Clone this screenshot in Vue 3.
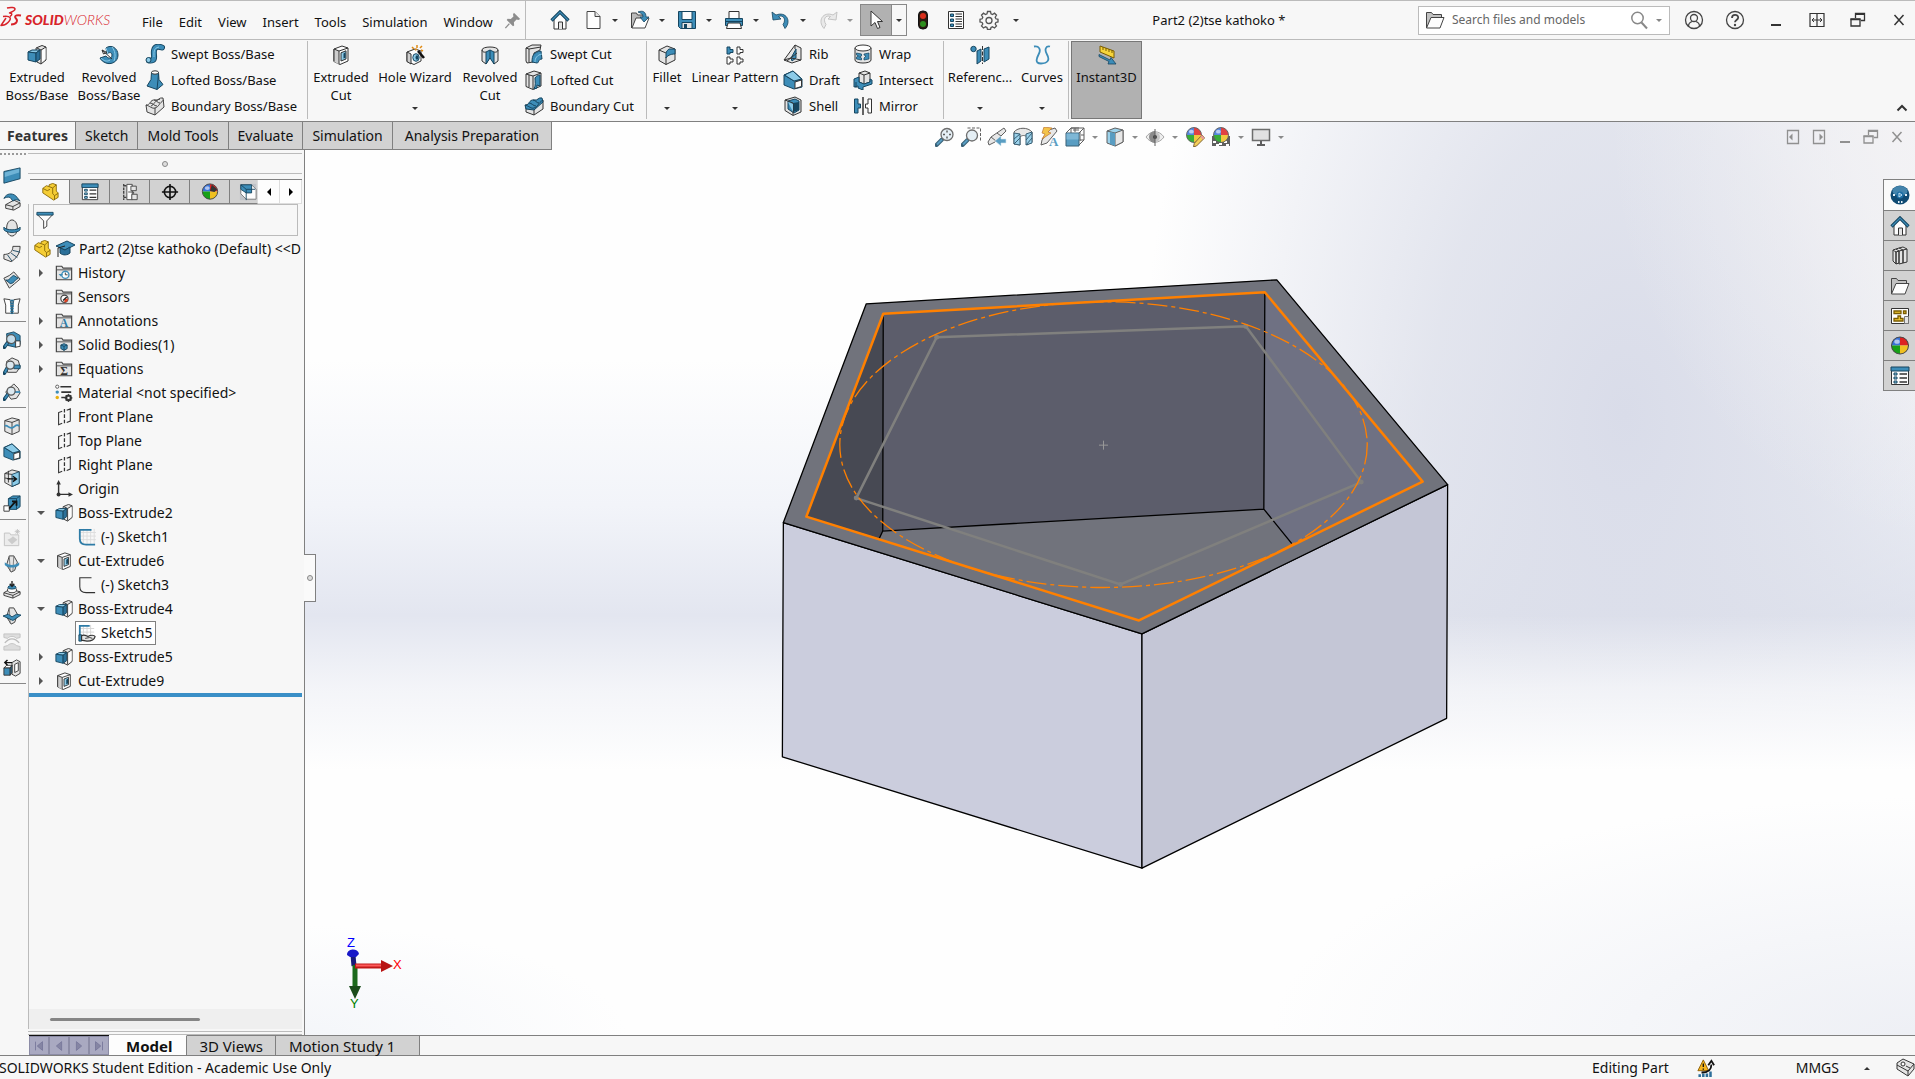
<script setup>
import { ref } from 'vue'

// icon colors
const K = '#333'
const D = '#16455f'
const B = '#3d8db8'
const L = '#8ccbe8'
const G = '#e4e4e4'
const W = '#fdfdfd'

const box = (fill, side, x = 0, y = 0) =>
  `<g transform="translate(${x} ${y})" stroke-linejoin="round"><path d="M1 4l3-3h6l-2 3z" fill="${W}" stroke="${K}"/><path d="M1 4h7v8H1z" fill="${fill}" stroke="${K}"/><path d="M8 4l2-3v8l-2 3z" fill="${side}" stroke="${K}"/></g>`
const ball = (x, y, r) =>
  `<g transform="translate(${x} ${y}) scale(${r})"><path d="M0 0V-1A1 1 0 0 0-1 0z" fill="#3a72d8"/><path d="M0 0V-1A1 1 0 0 1 1 0z" fill="#d22"/><path d="M0 0H-1A1 1 0 0 0 0 1z" fill="#17a017"/><path d="M0 0V1A1 1 0 0 0 1 0z" fill="#f0c020"/><circle r="1" fill="none" stroke="#444" stroke-width=".12"/><ellipse cx="-.35" cy="-.45" rx=".32" ry=".25" fill="#fff" opacity=".6"/></g>`
const folder = `<path d="M1.500 17.500v-15h6l1.500 2h9.500v13z" fill="${G}" stroke="#444" stroke-width="1.300"/><path d="M2 6.500h16" stroke="#444"/>`
const lens = (x, y, r) =>
  `<path d="M${x - r + 1} ${y + r - 1}L1.500 18" stroke="${D}" stroke-width="4" stroke-linecap="round"/><path d="M${x - r + 1} ${y + r - 1}L2 17.500" stroke="${B}" stroke-width="2"/><circle cx="${x}" cy="${y}" r="${r}" fill="#dceaf2" fill-opacity=".85" stroke="#555" stroke-width="1.300"/>`
const list = (head) =>
  `<path d="M1.500 1.500h17v17h-17z" fill="${W}" stroke="${K}"/>${head ? `<path d="M1 1h18v4H1z" fill="${B}" stroke="${D}"/>` : ''}<path d="M4 7h3v2H4zM4 11h3v2H4zM4 15h3v2H4z" fill="${L}" stroke="${D}"/><path d="M9.500 8H17M9.500 12H17M9.500 16H17" stroke="${K}" stroke-width="1.300"/>`

const icons = {
  home: `<path d="M4 9v10h12V9l-6-6z" fill="${W}" stroke="${K}"/><path d="M8.500 19v-7h4v7" fill="${G}" stroke="${K}"/><path d="M1.500 10.500L10 2l8.500 8.500" fill="none" stroke="${D}" stroke-width="3.200"/><path d="M2 10L10 2l8 8" fill="none" stroke="${B}" stroke-width="1.200"/>`,
  doc: `<path d="M4 1.500h8l5 5v12H4z" fill="${W}" stroke="#444"/><path d="M12 1.500v5h5" fill="${G}" stroke="#444"/>`,
  open: `<path d="M1.500 18V3h5l1 2h6v3" fill="#bbb" stroke="#444"/><path d="M2 18L6 8h13l-4 10z" fill="${W}" stroke="#444"/><path d="M8 2c5-2 8 0 8 5h3l-5 5-4-5h3c0-3-2-4-5-5z" fill="${B}" stroke="${D}" stroke-width=".8"/>`,
  save: `<path d="M1.500 1.500h17v17h-15l-2-2z" fill="${B}" stroke="${D}"/><path d="M5 1.500h10v8H5z" fill="${W}" stroke="${D}"/><path d="M5 12.500h10v6H5z" fill="${G}" stroke="${D}"/><path d="M7 14h3v4.500H7z" fill="${D}"/>`,
  print: `<path d="M5 8V1.500h10V8" fill="${W}" stroke="${K}"/><path d="M1.500 8.500h17v7h-17z" fill="${B}" stroke="${D}"/><path d="M1.500 11.500h17" stroke="${D}"/><path d="M4 13h12l1.500 5.500h-15z" fill="${W}" stroke="${K}"/>`,
  undo: `<path d="M1 2l1 8 8-1-2.500-2.500c5-2 8 3 4.500 8l2 4C21 11 15 1 5 5z" fill="${B}" stroke="${D}" stroke-width=".8"/>`,
  redo: `<path d="M19 2l-1 8-8-1 2.500-2.500c-5-2-8 3-4.500 8l-2 4C-1 11 5 1 15 5z" fill="#e9e9e9" stroke="#c4c4c4"/>`,
  cursor: `<path d="M5 1v15l4-3.500 2.500 6 2.500-1-2.500-6h5z" fill="${W}" stroke="${K}"/>`,
  traffic: `<rect x="5.500" y="1" width="9" height="18" rx="4" fill="#2b1b12" stroke="#111"/><circle cx="10" cy="6" r="3" fill="#d8301c"/><circle cx="10" cy="14" r="3" fill="#2f8f1f"/>`,
  options: `<path d="M2.500 1.500h15v17h-15z" fill="${W}" stroke="${K}"/><path d="M4.500 4h3v2.500h-3zM4.500 9h3v2.500h-3zM4.500 14h3v2.500h-3z" fill="${B}" stroke="${D}"/><path d="M9.500 4H16M9.500 6.500H16M9.500 9H16M9.500 11.500H16M9.500 14H16M9.500 16.500H16" stroke="${K}"/>`,
  gear: `<path d="M8.500 1.500h3l.5 2.300 1.500.7 2-1.300 2 2-1.300 2 .7 1.600 2.100.5v2.600l-2.100.6-.7 1.500 1.300 2-2 2-2-1.200-1.500.7-.5 2h-3l-.5-2-1.500-.7-2 1.200-2-2 1.300-2-.7-1.500L1 11.900V9.300l2.100-.5.7-1.600-1.300-2 2-2 2 1.300L8 3.800z" fill="#f7f7f7" stroke="#555" stroke-width="1.300"/><circle cx="10" cy="10.500" r="3" fill="none" stroke="#555" stroke-width="1.300"/>`,
  pin: `<path d="M11 2l7 7-2 1-2-.5-3 3 .3 3.500-1.300 1-7-7 1-1.300 3.500.3 3-3L10 4z" fill="#8d8d8d"/><path d="M6 14l-4.500 5" stroke="#8d8d8d" stroke-width="1.500"/>`,
  search: `<circle cx="8.500" cy="8" r="5.700" fill="none" stroke="#888" stroke-width="1.500"/><path d="M12.500 12.500l5.500 6" stroke="#888" stroke-width="2"/>`,
  folder: `<path d="M1.500 18V2.500h5l1.500 2h8.500V8" fill="#c2c2c2" stroke="#444"/><path d="M1.500 18L6 7.500h13L15 18z" fill="${W}" stroke="#444"/>`,
  user: `<circle cx="10" cy="10" r="8.500" fill="none" stroke="#444" stroke-width="1.300"/><circle cx="10" cy="8" r="3.500" fill="none" stroke="#444" stroke-width="1.300"/><path d="M4.500 16.500c0-3 2-4.500 3.700-5M15.500 16.500c0-3-2-4.500-3.700-5" fill="none" stroke="#444" stroke-width="1.300"/>`,
  help: `<circle cx="10" cy="10" r="8.500" fill="none" stroke="#444" stroke-width="1.300"/><path d="M7 8c0-4 6.200-4 6.200-.5 0 2.500-3.200 2.500-3.200 4.800" fill="none" stroke="#444" stroke-width="1.800"/><circle cx="10" cy="15" r="1.200" fill="#444"/>`,
  min: `<path d="M5 15h10" stroke="currentColor" stroke-width="2"/>`,
  span: `<path d="M3 3.500h14v13H3zM10 3.500v13" fill="none" stroke="currentColor" stroke-width="1.200"/><path d="M5 10h10M7 8l-2 2 2 2M13 8l2 2-2 2" fill="none" stroke="currentColor"/>`,
  restore: `<path d="M7.500 8V3.500h9v7H13" fill="none" stroke="currentColor" stroke-width="1.300"/><path d="M3 9h9v7H3z" fill="none" stroke="currentColor" stroke-width="1.300"/><path d="M7 4.300h10M2.500 9.500h10" stroke="currentColor" stroke-width="1.500"/>`,
  close: `<path d="M5.500 5l9 10M14.500 5l-9 10" stroke="currentColor" stroke-width="1.500"/>`,
  chevron: `<path d="M5.500 12.500L10 8l4.500 4.500" fill="none" stroke="#333" stroke-width="2"/>`,
  paneL: `<path d="M4.500 3.500h11v13h-11z" fill="none" stroke="currentColor" stroke-width="1.300"/><path d="M9.500 6.500L6 10l3.500 3.500z" fill="currentColor"/>`,
  paneR: `<path d="M4.500 3.500h11v13h-11z" fill="none" stroke="currentColor" stroke-width="1.300"/><path d="M10.500 6.500L14 10l-3.500 3.500z" fill="currentColor"/>`,

  extrude: `<path d="M9 3l6-2.500 4 1.500v13l-5 4-4-2z" fill="${G}" stroke="${K}"/><path d="M14 5l5-3M14 5v13.500M14 5l-4-2" fill="none" stroke="${K}"/><path d="M15 5.500l3.500-2.500v11l-3.500 3z" fill="${W}"/><path d="M1 7l4-2h8l-4 3z" fill="${L}" stroke="${D}"/><path d="M1 7l8 1v9l-8-2z" fill="${B}" stroke="${D}"/><path d="M9 8l4-3v9l-4 3z" fill="#2b7099" stroke="${D}"/>`,
  revolve: `<path d="M7 3c5-4 12 0 12 7s-7 10-12 8c-3-1-5-3-6-5l6-2c2 3 6 3 6-1 0-3-3-3-5-1z" fill="${B}" stroke="${D}"/><path d="M7 3l2 6M13 2c3 4 4 8 2 14M2 13c3 3 6 4 9 2" fill="none" stroke="${L}"/><path d="M3 5l10 9M3 5l1.500 4L8 7.500z" stroke="${K}" fill="${W}"/>`,
  sweep: `<path d="M4 16.500c8 1 4-5 5-10s5-4 8-3" fill="none" stroke="${D}" stroke-width="6" stroke-linecap="round"/><path d="M4 16.500c8 1 4-5 5-10s5-4 8-3" fill="none" stroke="${B}" stroke-width="4.200" stroke-linecap="round"/><path d="M9 13c0-4-1-9 5-10" fill="none" stroke="${L}"/><circle cx="3.500" cy="16" r="2.500" fill="${L}" stroke="${D}"/>`,
  loft: `<path d="M6.500 2.500h7l.5 7 4 5-6 5-10-3.500L6 9.500z" fill="${B}" stroke="${D}"/><path d="M12 19.500l1-10 .5-7" fill="none" stroke="${D}"/><ellipse cx="10" cy="2.500" rx="3.500" ry="1.700" fill="${W}" stroke="${K}"/>`,
  boundary: `<path d="M1 9c4 1 4-6 9-5 4 1 4-3 8-2l1 9-9 8-8-3z" fill="${G}" stroke="#444"/><path d="M1 9c4 1 6 4 9 3 4-1 4-5 9-8M5 7c3 0 4 3 7 3M9 4c3 0 3 3 6 3M10 12v7M6 10c3-1 4-6 9-7" fill="none" stroke="#444"/>`,
  extrudeCut: `<path d="M3 4l8-3 6 2v13l-8 3.500-6-3z" fill="${W}" stroke="${K}"/><path d="M3 4l5 2v13.500l-5-3z" fill="#cfcfcf"/><path d="M3 4l5 2 9-3M8 6v13M3 4v12.500" fill="none" stroke="${K}"/><path d="M10 7.800l5-2v8.200l-5 2z" fill="${L}" stroke="${K}"/><path d="M12.500 8.500v5l2 -.8V7.200z" fill="${D}"/>`,
  hole: `<path d="M2 7l8-3 6 2v10l-7 3.500-7-3z" fill="${W}" stroke="${K}"/><path d="M2 7l4 2v10l-4-2.500z" fill="#cfcfcf" stroke="${K}"/><ellipse cx="11" cy="12.500" rx="3.200" ry="3.800" fill="${L}" stroke="${D}"/><ellipse cx="12" cy="12.500" rx="1.500" ry="2.300" fill="${D}"/><path d="M13 6l6 7" stroke="#111" stroke-width="2.600"/><path d="M7 2l2 2M12 0v3M17 1l-2 2M18 6l-2-1M10 5l2-1" stroke="#e08a14" stroke-width="1.500"/>`,
  revolveCut: `<path d="M2 5c0-4 16-4 16 0v11l-4 3-3-9-5 9-4-3z" fill="${G}" stroke="${K}"/><path d="M6 7l4-2 4 2v12l-4-6-4 6z" fill="${B}" stroke="${D}"/><path d="M10 5v9" stroke="${D}"/><path d="M2 5c1 3 3 2 4 2M18 5c-1 3-3 2-4 2" fill="none" stroke="${K}"/>`,
  sweepCut: `<path d="M2 4l6-3h9l-1 5-6 3-1 9-6 1-1-2z" fill="${G}" stroke="${K}"/><path d="M5 18V5l12-2M2 4l3 1" fill="none" stroke="${K}"/><path d="M8 18c0-7 2-10 9-11l1 8c-4 0-3 4-5 4z" fill="${B}" stroke="${D}"/><path d="M11 18c0-4 2-7 7-8" fill="none" stroke="${L}"/>`,
  loftCut: `<path d="M2 4l8-3 7 2v13l-8 3.500-7-3z" fill="${G}" stroke="${K}"/><path d="M2 4l7 2 8-3M9 6v13M5 5v12" fill="none" stroke="${K}"/><path d="M11 8c2-3 5-3 5-3v11l-3-1v3l-3 1c2-4 1-7 1-11z" fill="${B}" stroke="${D}"/>`,
  boundaryCut: `<path d="M2 9l17-5v9l-9 6-8-3z" fill="${G}" stroke="${K}"/><path d="M1 9c4 1 4-6 9-5 4 1 4-3 8-2l1 4-9 8-8-1z" fill="${B}" stroke="${D}"/><path d="M1 9c4 1 6 4 9 3 4-1 4-5 9-8M5 7c3 0 4 3 7 3M9 4c3 0 3 3 6 3" fill="none" stroke="${D}"/><path d="M10 14v5" stroke="${K}"/>`,
  fillet: `<path d="M2 5l8-4 8 3v11l-9 4.500-7-4z" fill="${G}" stroke="${K}"/><path d="M2 5l7 3M9 12v7.500" stroke="${K}" fill="none"/><path d="M12 4l6 0 0 5c-5 0-8 2-9 4V9c0-3 2-4 3-5z" fill="${B}" stroke="${D}"/>`,
  linear: `<path d="M2 2h3v2.500h3v3H5V9H2z" fill="${B}" stroke="${D}"/><path d="M12 2h3v2.500h3v3h-3V9h-3zM2 12h3v2h3v3H5v2H2zM12 12h3v2h3v3h-3v2h-3z" fill="${W}" stroke="${K}"/>`,
  rib: `<path d="M1 16L12 1l6 3v12l-9 3z" fill="${G}" stroke="${K}"/><path d="M8 14l5-9v9l-4 3z" fill="${B}" stroke="${D}"/><path d="M12 1v4M1 16l7-2 10 2M4 17L14 9" fill="none" stroke="${K}"/>`,
  draft: `<path d="M1 5l9-4 9 8v8l-8 2-10-4z" fill="${B}" stroke="${D}"/><path d="M1 5l10 6 8-2" fill="none" stroke="${D}"/><path d="M1.500 5l8.500-4 8.500 8-7.500 2z" fill="${L}" stroke="${D}"/><path d="M12 12l6.500-2v6.500L12 18.500z" fill="${W}" stroke="${K}"/>`,
  shell: `<path d="M2 4l10-3 6 3v12l-8 3.500-8-5z" fill="${G}" stroke="${K}"/><path d="M5 5l7-2 4 2v9l-5 3-6-4z" fill="${B}" stroke="${D}"/><path d="M10 7v9l6-2V6z" fill="${D}"/><path d="M2 4l8 3v12" fill="none" stroke="${K}"/><path d="M5 6l5 2v8" fill="${L}"/>`,
  wrap: `<path d="M2 4v12c0 4 16 4 16 0V4" fill="${G}" stroke="${K}"/><ellipse cx="10" cy="4" rx="8" ry="3" fill="${W}" stroke="${K}"/><path d="M3.500 9l5 1v2l-2 1 2 1v2l-5-1v-2l2-1-2-1zM11 10l5-1v6l-5 1v-2l2-2-2-1z" fill="${B}" stroke="${D}" stroke-width=".7"/>`,
  intersect: `<path d="M6 3l6-2 5 2v9l-6 2-5-2z" fill="${G}" stroke="${K}"/><path d="M6 3l5 2 6-2M11 5v8" fill="none" stroke="${K}"/><path d="M1 9l5-2v5l5 2 6-2v-3l2 1v4l-9 3v3l-5-2v-2l-4 1z" fill="${B}" stroke="${D}"/><path d="M3 12v6" stroke="${D}"/>`,
  mirror: `<path d="M1.500 3H5v5h2.500v4H5v5H1.500z" fill="${B}" stroke="${D}"/><path d="M18.500 3H15v5h-2.500v4H15v5h3.500z" fill="${W}" stroke="${K}"/><path d="M10 1v18" stroke="${K}" stroke-width="1.500"/>`,
  reference: `<circle cx="3.500" cy="4" r="2.700" fill="${B}" stroke="${D}"/><path d="M7 6l4-2v12l-4 3zM14 4l5-2v12l-5 3z" fill="${B}" stroke="${D}"/><path d="M12.500 1v18" stroke="${K}" stroke-dasharray="4 1.500"/>`,
  curves: `<path d="M2 1.500c5-1 7 3 5 7s-5 10 2 10 9-4 6-9-1-9 3-8" fill="none" stroke="${B}" stroke-width="1.800"/>`,
  instant: `<path d="M3 1l14 5v7L3 7z" fill="#f6d53c" stroke="#7a5c00"/><path d="M6 2v3M9 3v3M12 4v3M15 5v3" stroke="#7a5c00"/><path d="M2 9.500l11 5.500 1-2.500 5 6.500-8 0 1-2.500-10-5z" fill="${B}" stroke="${D}" stroke-width=".8"/>`,

  zoomFit: `${lens(12, 7.500, 6)}<path d="M12 3.500v2M12 9.500v2M8 7.500h2M14 7.500h2" stroke="#444" stroke-width="1.500"/>`,
  zoomArea: `<path d="M6.500 1h13v13" fill="none" stroke="#444" stroke-dasharray="3 1.500"/>${lens(11, 8.500, 5.500)}`,
  prevView: `<path d="M17 1l2 3-11 11-6 3-1-3 3-5z" fill="${G}" stroke="#444"/><path d="M4 10l5 4M10 6l4 3" stroke="#444"/><path d="M19 12h-5V9l-6 5 6 5v-3h5z" fill="${B}" stroke="#cfe3ee" stroke-width=".6"/>`,
  section: `<path d="M1 5c4-5 14-5 18 0v10l-5 3v-8c-2-2-5-2-7 0v8l-6-1z" fill="${G}" stroke="#444"/><path d="M1 6l6 1v11l-6-1zM13 7l6-2v11l-6 2z" fill="${L}" stroke="${D}"/><path d="M1 12l6-5M1 17l6-6M13 13l6-7M13 18l6-7" stroke="${D}"/>`,
  annot: `<path d="M10 3l6-2 2 3L8 16l-6 2 1-5z" fill="${G}" stroke="#444"/><path d="M5 0l8 1-4 4 3 1-9 6 3-5-3-1z" fill="#f2b92a" stroke="#b05a10" stroke-width=".7"/><text x="10" y="19" font-family="Liberation Serif" font-weight="700" font-size="13" fill="${B}">A</text>`,
  viewCube: `<path d="M6 1h13v12h-4M6 1v5M1 6l5-5M14 6l5-5M14 18l5-5M10 1v4M15 5v9M6 1l8 0" fill="none" stroke="#444"/><path d="M1 6h13v13H1z" fill="${B}" stroke="${D}"/><path d="M1.500 6.500h12v6h-12z" fill="#68abd0"/><path d="M16 8h3M8 3h6" stroke="#444"/>`,
  display: `<path d="M2 4l8-3 8 2v12l-8 4-8-3z" fill="${L}" stroke="#444"/><path d="M10 6l8-3v12l-8 4z" fill="${G}" stroke="#444"/><path d="M2 4l8 2" stroke="#444"/><path d="M5 5v12l5 2V6z" fill="${B}"/>`,
  eye: `<path d="M1 10c5-7 13-7 18 0-5 7-13 7-18 0z" fill="#ececec" stroke="#999"/><path d="M10 4a5.500 5.500 0 0 0 0 12z" fill="#777"/><path d="M10 5a5 5 0 0 1 0 10" fill="#bbb"/><circle cx="10" cy="10" r="2" fill="#222"/><path d="M10 2v17" stroke="#444"/>`,
  appearance: `${ball(9, 8, 7.500)}<path d="M17 8l2.500 3-8 8-3 .8.800-3.500z" fill="#f3c63c" stroke="#6b4a10"/><path d="M17 8l2.500 3-1.500 1.500-2.700-2.800z" fill="#e58a8a"/>`,
  scene: `<path d="M1 9h18v10H1z" fill="#444"/><path d="M2 14h3v2H2zM8 16h3v2H8zM13 14h3v2h-3zM5 17h3v2H5zM15 17h3v2h-3z" fill="#fff"/>${ball(10, 8, 7.500)}`,
  monitor: `<path d="M1.500 2.500h17v11h-17z" fill="#dedede" stroke="#555" stroke-width="1.500"/><path d="M10 14v4M6 18h8" stroke="#444" stroke-width="2"/>`,

  part: `<path d="M2 6l4-3 3 1V2l4-1.500L17 2v7l2 2v5l-5 3L2 11z" fill="#f5cd35" stroke="#8a6a08"/><path d="M2 6l5 2.500 3-1.500M9 4l4 1.500V12l2 2 4-2.500M13 5.500L17 2M15 14v5" fill="none" stroke="#8a6a08"/>`,
  props: list(true),
  config: `<path d="M3 1v18M3 3h4M3 16h6" stroke="#444" stroke-width="1.500" stroke-dasharray="3 1"/><path d="M6.500 1.500h6v17h-6z" fill="${W}" stroke="#444"/><path d="M11 3.500h6v5h-6zM12 12.500h6v6h-6z" fill="${G}" stroke="#444"/><path d="M8 10h6v2" fill="none" stroke="#444"/>`,
  target: `<circle cx="10" cy="10" r="6.300" fill="none" stroke="#111" stroke-width="1.800"/><path d="M10 1v18M1 10h18" stroke="#111" stroke-width="1.800"/>`,
  ball: ball(10, 9.500, 8.500),
  ballDark: `${ball(10, 9.500, 8.500)}<path d="M12 2l6 5-3 3-5-1z" fill="#333"/>`,
  dispMgr: `<path d="M1 1h18v18H1z" fill="#bfc3c8"/><path d="M2 2l12 0 5 5v11H8L2 12z" fill="${W}" stroke="#777"/><path d="M2 2h12v9H8L2 7z" fill="${B}" stroke="${D}"/><path d="M2 2l6 5h10M8 7v12" fill="none" stroke="${D}"/>`,
  funnel: `<path d="M1.500 4h17L12 11v6l-3.500 2.500V11z" fill="${W}" stroke="${K}"/><path d="M1 1.500h18v3H1z" fill="${B}" stroke="${D}"/>`,
  cap: `<path d="M1 7l11-5 8 4-10 5z" fill="${B}" stroke="${D}"/><path d="M5 9v5c3 3 8 2 10 0V8l-5 3z" fill="#2b7099" stroke="${D}"/><path d="M10 7l-7 2v9" fill="none" stroke="#222"/>`,
  history: `${folder}<circle cx="11.500" cy="12" r="4" fill="${W}" stroke="${B}" stroke-width="1.500"/><path d="M11.500 9.500V12h2.500" stroke="${K}" fill="none"/><path d="M4 11h5l-2.500 3z" fill="${B}"/>`,
  sensors: `${folder}<circle cx="10.500" cy="12" r="4" fill="${W}" stroke="#444" stroke-width="1.300"/><path d="M10.500 12h4a4 4 0 0 1-4 4z" fill="#e04020"/><path d="M9 14l4-4" stroke="#222" stroke-width="1.500"/>`,
  annotations: `${folder}<text x="10" y="16.500" text-anchor="middle" font-family="Liberation Serif" font-weight="700" font-size="13" fill="#2d7ba6">A</text>`,
  bodies: `${folder}<path d="M6.500 10l3.500-1.500 3.500 1.500v4L10 16l-3.500-2z" fill="${B}" stroke="${D}"/><path d="M6.500 10l3.500 1.500 3.500-1.500M10 11.500V16" fill="none" stroke="${D}"/>`,
  equations: `${folder}<text x="10" y="16.500" text-anchor="middle" font-family="Liberation Serif" font-weight="700" font-size="13" fill="#333">Σ</text>`,
  material: `<path d="M6 3h12M7 9h11M7 15h5" stroke="${K}" stroke-width="1.800"/><circle cx="2.500" cy="3" r="1.800" fill="${W}" stroke="#555"/><circle cx="2.500" cy="9" r="1.900" fill="${B}"/><circle cx="2.500" cy="15" r="1.900" fill="#e8b010"/><circle cx="15" cy="15.500" r="2.700" fill="none" stroke="#333" stroke-width="2.200"/><path d="M15 11v9M10.500 15.500h9M12 12.500l6 6M18 12.500l-6 6" stroke="#333"/><circle cx="15" cy="15.500" r="1.200" fill="#f7f7f7"/>`,
  plane: `<path d="M8 3.500L4 5v13.500l4-1.500M13 2.500l4-1.500v13.500l-4 1.500" fill="none" stroke="${K}" stroke-width="1.200"/><path d="M10.500 1v18" stroke="${K}" stroke-width="1.400" stroke-dasharray="4 2"/>`,
  origin: `<path d="M4 3v13h13" fill="none" stroke="${K}" stroke-width="1.600"/><path d="M1.500 5L4 0l2.500 5zM15 13.500l5 2.500-5 2.500z" fill="${K}"/><circle cx="4" cy="16" r="2.200" fill="${K}"/>`,
  sketch: `<path d="M6 1v17M10 1v17M14 1v17M18 1v17M2 5h18M2 9h18M2 13h18" stroke="#ddd"/><path d="M15 2H2v10c0 5 3 6.500 7 6.500h10" fill="none" stroke="#2d7ba6" stroke-width="2"/>`,
  sketchPlain: `<path d="M15 2H2v10c0 5 3 6.500 7 6.500h10" fill="none" stroke="${K}" stroke-width="1.200"/>`,
  sketchShared: `<path d="M6 1v12M10 1v12M14 1v12M2 5h16M2 9h16" stroke="#d4d4d4"/><path d="M13 2H2v11" fill="none" stroke="#2d7ba6" stroke-width="2"/><path d="M1 12h3v7H1z" fill="${B}" stroke="${D}"/><path d="M4 13c3-2 5 0 7 1 3-2 7-2 8 0-1 4-6 5-9 5l-6-1z" fill="${G}" stroke="${K}" stroke-width="1.300"/><path d="M8 16l5-1 3 1" fill="none" stroke="${K}"/>`,

  surfPlane: `<path d="M1 5l18-4v12L1 18z" fill="${B}" stroke="${D}"/><path d="M2 6l16-4v4L2 11z" fill="#6fb3d6"/>`,
  surfExtrude: `<path d="M3 13l9-5 7 3v4l-7 4-9-2z" fill="${G}" stroke="${K}"/><path d="M3 13l8 2 8-4M11 15v4" fill="none" stroke="${K}"/><path d="M1 6c3-6 9-6 13-3l5 6c-3-2-6-2-8 0L8 5C5 4 3 5 1 6z" fill="${B}" stroke="${D}"/>`,
  surfRevolve: `<ellipse cx="10" cy="10" rx="6" ry="9" fill="${G}" stroke="${K}"/><path d="M1 9c2 4 16 4 18 0v3c-3 4-15 4-18 0z" fill="${B}" stroke="${D}"/>`,
  surfSweep: `<path d="M11 1.500h8c0 9-5 14-10 17l-8-3v-5c6 0 10-3 10-9z" fill="${G}" stroke="${K}"/><path d="M11 6l8 2M9 9l7 5M5 11l5 7" fill="none" stroke="${D}"/>`,
  surfOffset: `<path d="M1 8l6-3 5-4 7 8-6 5-6 5z" fill="${G}" stroke="${K}"/><path d="M3 10c5 1 5-4 9-5l5 3c-4 1-4 6-9 6z" fill="${B}" stroke="${D}"/>`,
  surfKnit: `<path d="M1 2l7 1 2 15H3V9zM19 2l-7 1-2 15h7V9z" fill="${W}" stroke="${K}"/><path d="M10 3v16" stroke="${B}" stroke-width="4" stroke-dasharray="2 1"/><path d="M10 3v16" stroke="${D}"/>`,
  lensCube: `<path d="M4 3l8-2 7 4v10l-5 3-9-2z" fill="${B}" stroke="${D}"/><path d="M14 11h5v6l-5 1z" fill="${W}" stroke="${K}"/>${lens(9, 9, 5)}`,
  lensTube: `<path d="M4 5l6-4 7 3 2 7-4 6H5z" fill="${G}" stroke="${K}"/><path d="M12 9h7v4h-7z" fill="${B}" stroke="${D}"/>${lens(8, 9, 4.500)}`,
  lensCone: `<path d="M12 1l5 5 2 5-4 6-6 1-6-8z" fill="${G}" stroke="${K}"/><path d="M12 10h7" stroke="${B}" stroke-width="2"/>${lens(9, 9, 4.500)}`,
  split: `<path d="M2 4l8-3 8 2v13l-8 3.500L2 16z" fill="${G}" stroke="${K}"/><path d="M2 4l8 2 8-3M10 6v13" fill="none" stroke="${K}"/><path d="M2 10c3-2 4 3 8 2s4-5 8-2" fill="none" stroke="${B}" stroke-width="2"/>`,
  moveFace: `<path d="M2 5l8-4 8 2v13l-8 3.500L2 15z" fill="${G}" stroke="${K}"/><path d="M10 6l8-3v13l-8 3.500z" fill="${L}" stroke="${D}"/><path d="M2 5l8 1M6 2v13M2 10l6 1" stroke="${K}" fill="none"/><path d="M5 11h9M11 8l4 3-4 3" fill="none" stroke="#111" stroke-width="1.500"/>`,
  scale: `<path d="M6 4l5-3h8v12l-4 3H6z" fill="${B}" stroke="${D}"/><path d="M6 4h9v12M15 4l4-3" fill="none" stroke="${D}"/><path d="M1 12h6v6H1z" fill="${W}" stroke="${K}"/><path d="M7 15l7-8M10 7h5v5" fill="none" stroke="#111" stroke-width="2"/>`,
  grayFolder: `<path d="M1.500 18.500v-14h6l1 2h9v12z" fill="#ececec" stroke="#c2c2c2"/><path d="M5 12l4-2 2-2 5 4-6 5z" fill="#ccc"/><path d="M16 0v6M13 3h6M14 1l4 4M18 1l-4 4" stroke="#c2c2c2"/>`,
  parting: `<path d="M7 1h5l4 7-3 9-4 2-5-8z" fill="${G}" stroke="${K}"/><path d="M7 1l1 17M12 1l-1 17" stroke="#777"/><path d="M2 8c4 4 12 4 16 0v3c-4 4-12 4-16 0z" fill="${B}"/>`,
  shutoff: `<path d="M1 13l7-4 11 3v3l-8 4-10-3z" fill="${G}" stroke="${K}"/><path d="M1 13l10 3 8-4M11 16v3" fill="none" stroke="${K}"/><ellipse cx="10" cy="10" rx="5" ry="3" fill="${W}" stroke="${K}"/><ellipse cx="10" cy="7" rx="4.500" ry="2" fill="${B}" stroke="${D}"/><path d="M10 0v6M7.500 3L10 6l2.500-3" fill="none" stroke="#222" stroke-width="1.500"/>`,
  partSurf: `<path d="M7 1h5l4 7-3 9-4 2-5-8z" fill="${G}" stroke="${K}"/><path d="M7 1l1 17" stroke="#777"/><path d="M0 10l6-2 4 3 5-3 5 1-9 6z" fill="${B}" stroke="${D}"/>`,
  grayTool: `<path d="M1 1h18v4l-4 1c-3-3-7-3-10 0L1 5zM1 19h18v-4l-4-1c-3-3-7-3-10 0l-4 1z" fill="#ddd" stroke="#c2c2c2"/><path d="M2 11c5-6 11-6 16 0" fill="none" stroke="#bbb" stroke-width="1.500"/>`,
  core: `<path d="M10 4l5-3 4 2v13l-5 3-4-2z" fill="${G}" stroke="${K}"/><path d="M13 6l4-2v9l-4 2z" fill="${W}" stroke="${K}"/>${box(B, '#2b7099', 0, 6)}<path d="M10 4H2M5 1L2 4l3 3" fill="none" stroke="#111" stroke-width="1.600"/>`,

  compass: `<circle cx="10" cy="10" r="9.500" fill="#0f4a72"/><ellipse cx="10" cy="6" rx="7.500" ry="5" fill="#5a9cc4" opacity=".7"/><circle cx="10" cy="10" r="3.500" fill="#1d6fa5"/><path d="M9 8v4l3-2z" fill="none" stroke="#bfe0f4"/><path d="M8 16h1.500v2H8zM11 16h1.500v2H11zM3 9h2v2H3zM15 9h2v2h-2z" fill="#e4f1f9"/>`,
  books: `<path d="M3 4l3 2v12l-3-3zM6 6l3-1v12l-3 1zM9 5l4-1v13l-4 1zM13 4l4-1v13l-4 1z" fill="${G}" stroke="${K}"/><path d="M3 4l3-1 3 2M6 3l3-1 4 2M9 2l4-1 4 2" fill="${W}" stroke="${K}"/>`,
  palette: `<path d="M1.500 2.500h17v15h-17z" fill="${W}" stroke="${K}"/><path d="M4 5h7v2.500H4zM13.500 5H16v2.500h-2.500zM8 10h2.500v2.500H13V15H4v-2.500h4z" fill="#f5cd35" stroke="#7a5c00" stroke-width="1.300"/><path d="M14.500 10.500h4v7h-4z" fill="${G}" stroke="#777"/>`,
  warn: `<path d="M7 1l6 12H1z" fill="#f6b51e" stroke="#8a5a00"/><path d="M7 5v4M7 10.500v1.500" stroke="#111" stroke-width="1.500"/><path d="M3 17v3M7 16v4M11 16v4M15 14v6" stroke="#2d6f9a" stroke-width="2.800"/><path d="M5 15c8 0 11-4 11-9M12.500 7L16 2l3 5" fill="none" stroke="#111" stroke-width="2"/>`,
  tag: `<path d="M2 5l6-4 11 5v5l-6 7-11-7z" fill="${G}" stroke="${K}"/><path d="M2 7l11 6 6-7M13 13v4" fill="none" stroke="${K}"/><circle cx="8" cy="6" r="2" fill="${W}" stroke="${K}"/><path d="M11 8l4 2" stroke="${K}"/>`
}

const menus = ['File', 'Edit', 'View', 'Insert', 'Tools', 'Simulation', 'Window']
const quickTools = [
  { icon: 'doc', label: 'New' },
  { icon: 'open', label: 'Open' },
  { icon: 'save', label: 'Save' },
  { icon: 'print', label: 'Print' },
  { icon: 'undo', label: 'Undo' },
  { icon: 'redo', label: 'Redo' }
]
const windowTools = [
  { icon: 'user', label: 'Account' },
  { icon: 'help', label: 'Help' },
  { icon: 'min', label: 'Minimize' },
  { icon: 'span', label: 'Span displays' },
  { icon: 'restore', label: 'Restore' },
  { icon: 'close', label: 'Close' }
]

const ribbon = [
  {
    big: [
      { icon: 'extrude', label: 'Extruded Boss/Base', width: 72 },
      { icon: 'revolve', label: 'Revolved Boss/Base', width: 72 }
    ],
    columns: [
      [
        { icon: 'sweep', label: 'Swept Boss/Base' },
        { icon: 'loft', label: 'Lofted Boss/Base' },
        { icon: 'boundary', label: 'Boundary Boss/Base' }
      ]
    ],
    widths: [162]
  },
  {
    big: [
      { icon: 'extrudeCut', label: 'Extruded Cut', width: 66 },
      { icon: 'hole', label: 'Hole Wizard', width: 82, menu: true },
      { icon: 'revolveCut', label: 'Revolved Cut', width: 68 }
    ],
    columns: [
      [
        { icon: 'sweepCut', label: 'Swept Cut' },
        { icon: 'loftCut', label: 'Lofted Cut' },
        { icon: 'boundaryCut', label: 'Boundary Cut' }
      ]
    ],
    widths: [122]
  },
  {
    big: [
      { icon: 'fillet', label: 'Fillet', width: 40, menu: true },
      { icon: 'linear', label: 'Linear Pattern', width: 96, menu: true }
    ],
    columns: [
      [
        { icon: 'rib', label: 'Rib' },
        { icon: 'draft', label: 'Draft' },
        { icon: 'shell', label: 'Shell' }
      ],
      [
        { icon: 'wrap', label: 'Wrap' },
        { icon: 'intersect', label: 'Intersect' },
        { icon: 'mirror', label: 'Mirror' }
      ]
    ],
    widths: [70, 90]
  },
  {
    big: [
      { icon: 'reference', label: 'Referenc...', width: 72, menu: true },
      { icon: 'curves', label: 'Curves', width: 52, menu: true }
    ],
    columns: [],
    widths: []
  }
]

const tabs = ['Features', 'Sketch', 'Mold Tools', 'Evaluate', 'Simulation', 'Analysis Preparation']
const activeTab = ref('Features')

const sideTools = [
  ['surfPlane', 'surfExtrude', 'surfRevolve', 'surfSweep', 'surfOffset', 'surfKnit'],
  ['lensCube', 'lensTube', 'lensCone'],
  ['split', 'draft', 'moveFace', 'scale'],
  ['grayFolder', 'parting', 'shutoff', 'partSurf', 'grayTool', 'core']
]

const managerTabs = ['part', 'props', 'config', 'target', 'ballDark', 'dispMgr']

const tree = [
  { icon: 'history', label: 'History', arrow: 'right' },
  { icon: 'sensors', label: 'Sensors' },
  { icon: 'annotations', label: 'Annotations', arrow: 'right' },
  { icon: 'bodies', label: 'Solid Bodies(1)', arrow: 'right' },
  { icon: 'equations', label: 'Equations', arrow: 'right' },
  { icon: 'material', label: 'Material <not specified>' },
  { icon: 'plane', label: 'Front Plane' },
  { icon: 'plane', label: 'Top Plane' },
  { icon: 'plane', label: 'Right Plane' },
  { icon: 'origin', label: 'Origin' },
  { icon: 'extrude', label: 'Boss-Extrude2', arrow: 'down' },
  { icon: 'sketch', label: '(-) Sketch1', child: true },
  { icon: 'extrudeCut', label: 'Cut-Extrude6', arrow: 'down' },
  { icon: 'sketchPlain', label: '(-) Sketch3', child: true },
  { icon: 'extrude', label: 'Boss-Extrude4', arrow: 'down' },
  { icon: 'sketchShared', label: 'Sketch5', child: true, selected: true },
  { icon: 'extrude', label: 'Boss-Extrude5', arrow: 'right' },
  { icon: 'extrudeCut', label: 'Cut-Extrude9', arrow: 'right' }
]

const viewTools = [
  { icon: 'zoomFit', label: 'Zoom to fit' },
  { icon: 'zoomArea', label: 'Zoom to area' },
  { icon: 'prevView', label: 'Previous view' },
  { icon: 'section', label: 'Section view' },
  { icon: 'annot', label: 'Dynamic annotation views' },
  { icon: 'viewCube', label: 'View orientation', menu: true },
  { icon: 'display', label: 'Display style', menu: true },
  { icon: 'eye', label: 'Hide/show items', menu: true },
  { icon: 'appearance', label: 'Edit appearance' },
  { icon: 'scene', label: 'Apply scene', menu: true },
  { icon: 'monitor', label: 'View settings', menu: true }
]
const docTools = ['paneL', 'paneR', 'min', 'restore', 'close']
const taskPane = ['compass', 'home', 'books', 'folder', 'palette', 'ball', 'props']

const navButtons = [
  { label: 'First', d: 'M4 3v10M12 3v10L6 8z' },
  { label: 'Previous', d: 'M11 3v10L5 8z' },
  { label: 'Next', d: 'M5 3v10l6-5z' },
  { label: 'Last', d: 'M12 3v10M4 3v10l6-5z' }
]
const bottomTabs = ['Model', '3D Views', 'Motion Study 1']
const activeBottom = ref('Model')
</script>

<template>
  <div class="app">
    <header class="topbar">
      <div class="brand">
        <svg class="brand-mark" viewBox="0 0 22 22" fill="none" stroke="#d8232a" stroke-linejoin="round">
          <path d="M7 2c4-1 8-.5 8 1S12 6 9.500 7c3 0 3 2 .5 3.500" stroke-width="1.500" />
          <path d="M3 10.500c8-1 9 2 5 6-2 2-4.500 3-7 3l5-7.500" stroke-width="1.500" />
          <path d="M21 9.500c-6-1-7 1-5 3s1 6-5 6" stroke-width="1.900" />
        </svg>
        <span class="brand-name"><b>SOLID</b>WORKS</span>
      </div>
      <nav class="menus">
        <button v-for="m in menus" :key="m">{{ m }}</button>
      </nav>
      <button class="pin" aria-label="Pin menu"><svg class="icon small" viewBox="0 0 20 20" v-html="icons.pin" /></button>
      <div class="quick">
        <button class="quick-btn home" aria-label="Home"><svg class="icon" viewBox="0 0 20 20" v-html="icons.home" /></button>
        <div class="quick-list">
          <div v-for="t in quickTools" :key="t.icon" class="quick-item">
            <button class="quick-btn" :aria-label="t.label"><svg class="icon" viewBox="0 0 20 20" v-html="icons[t.icon]" /></button>
            <button :class="['drop', { faded: t.icon === 'redo' }]" :aria-label="t.label + ' menu'"><i class="caret" /></button>
          </div>
        </div>
        <div class="select-tool">
          <button class="select-main" aria-label="Select"><svg class="icon" viewBox="0 0 20 20" v-html="icons.cursor" /></button>
          <button class="select-drop" aria-label="Select menu"><i class="caret" /></button>
        </div>
        <button class="quick-btn wide" aria-label="Rebuild"><svg class="icon" viewBox="0 0 20 20" v-html="icons.traffic" /></button>
        <button class="quick-btn wide" aria-label="File properties"><svg class="icon" viewBox="0 0 20 20" v-html="icons.options" /></button>
        <button class="quick-btn wide" aria-label="Options"><svg class="icon" viewBox="0 0 20 20" v-html="icons.gear" /></button>
        <button class="drop" aria-label="Options menu"><i class="caret" /></button>
      </div>
      <div class="title">Part2 (2)tse kathoko *</div>
      <div class="search">
        <svg class="icon" viewBox="0 0 20 20" v-html="icons.folder" />
        <input type="text" placeholder="Search files and models" aria-label="Search files and models" />
        <svg class="icon" viewBox="0 0 20 20" v-html="icons.search" />
        <button class="drop gray" aria-label="Search scope"><i class="caret" /></button>
      </div>
      <button v-for="t in windowTools" :key="t.icon" class="win-btn" :aria-label="t.label">
        <svg class="icon" viewBox="0 0 20 20" v-html="icons[t.icon]" />
      </button>
    </header>

    <div class="ribbon">
      <div v-for="(g, gi) in ribbon" :key="gi" class="group">
        <button v-for="b in g.big" :key="b.label" class="big" :style="{ width: b.width + 'px' }">
          <svg class="icon" viewBox="0 0 20 20" v-html="icons[b.icon]" />
          <span>{{ b.label }}</span>
          <i v-if="b.menu" class="caret" />
        </button>
        <div v-for="(col, ci) in g.columns" :key="ci" class="column" :style="{ width: g.widths[ci] + 'px' }">
          <button v-for="b in col" :key="b.label" class="small-btn">
            <svg class="icon" viewBox="0 0 20 20" v-html="icons[b.icon]" />
            <span>{{ b.label }}</span>
          </button>
        </div>
      </div>
      <button class="big instant">
        <svg class="icon" viewBox="0 0 20 20" v-html="icons.instant" />
        <span>Instant3D</span>
      </button>
      <button class="collapse" aria-label="Collapse ribbon"><svg class="icon" viewBox="0 0 20 20" v-html="icons.chevron" /></button>
    </div>

    <main class="workspace">
      <nav class="tabs">
        <button v-for="t in tabs" :key="t" :class="{ active: t === activeTab }" @click="activeTab = t">{{ t }}</button>
      </nav>

      <aside class="sidebar">
        <div class="grip" />
        <div v-for="(group, i) in sideTools" :key="i" class="side-group">
          <button v-for="name in group" :key="name" :aria-label="name">
            <svg class="icon small" viewBox="0 0 20 20" v-html="icons[name]" />
          </button>
        </div>
      </aside>

      <section class="panel">
        <div class="panel-handle"><i class="dot" /></div>
        <div class="manager-tabs">
          <button v-for="(name, i) in managerTabs" :key="name" :class="{ active: i === 0 }" :aria-label="name">
            <svg class="icon small" viewBox="0 0 20 20" v-html="icons[name]" />
          </button>
          <button class="scroll" aria-label="Scroll left"><i class="tri left" /></button>
          <button class="scroll" aria-label="Scroll right"><i class="tri right" /></button>
        </div>
        <div class="tree-area">
          <div class="filter">
            <svg class="icon small" viewBox="0 0 20 20" v-html="icons.funnel" />
            <input type="text" aria-label="Filter tree" />
          </div>
          <ul class="tree">
            <li class="root">
              <svg class="icon small" viewBox="0 0 20 20" v-html="icons.part" />
              <svg class="icon" viewBox="0 0 20 20" v-html="icons.cap" />
              <span>Part2 (2)tse kathoko (Default) &lt;&lt;D</span>
            </li>
            <li v-for="n in tree" :key="n.label" :class="{ child: n.child }">
              <span class="twisty"><i v-if="n.arrow" :class="['tri', n.arrow]" /></span>
              <span :class="['node', { selected: n.selected }]">
                <svg class="icon small" viewBox="0 0 20 20" v-html="icons[n.icon]" />
                <span>{{ n.label }}</span>
              </span>
            </li>
          </ul>
          <div class="rollback" />
          <div class="hscroll"><i /></div>
        </div>
        <div class="panel-foot" />
      </section>

      <section class="viewport">
        <svg class="model" viewBox="0 0 1610 914">
          <g stroke="#000" stroke-width="1.300" stroke-linejoin="round">
            <path d="M478 401L837 512.500V747L477 635.500z" fill="#cbcddd" />
            <path d="M837 512.500L1143 363L1142 597L837 747z" fill="#c4c6d6" />
            <path d="M561 182L972 158L1143 363L837 512.500L478 401z" fill="#71737c" />
          </g>
          <path d="M578 192L577.500 409.500L574 417L501 395z" fill="#474953" />
          <path d="M578 192L960 170.500L959 387.500L577.500 409.500z" fill="#5c5d6b" />
          <path d="M960 170.500L1118 360L987 423L959 387.500z" fill="#6f7183" />
          <path d="M578 192L577.500 409.500L959 387.500L960 170.500M577.500 409.500L574 417M959 387.500L987 422" fill="none" stroke="#000" stroke-width="1.300" />
          <path d="M631.500 215.500L941 204.500L1056.500 360.500L815.500 463L551 376.500z" fill="none" stroke="#80807e" stroke-width="2.500" />
          <g fill="#80807e">
            <circle cx="631.500" cy="215.500" r="2.500" />
            <circle cx="941" cy="204.500" r="2.500" />
            <circle cx="1056.500" cy="360.500" r="2.500" />
            <circle cx="815.500" cy="463" r="2.500" />
            <circle cx="551" cy="376.500" r="2.500" />
          </g>
          <ellipse cx="798.500" cy="323" rx="264" ry="143" fill="none" stroke="#ff8000" stroke-width="1.300" stroke-dasharray="20 4 4 4" />
          <path d="M578 192L960 170.500L1118 360L834 499L501 395z" fill="none" stroke="#ff8000" stroke-width="2.500" stroke-linejoin="round" />
          <path d="M794 323.500h9M798.500 319v9" stroke="#999" />
        </svg>

        <div class="view-bar">
          <template v-for="t in viewTools" :key="t.icon">
            <button class="view-btn" :aria-label="t.label"><svg class="icon" viewBox="0 0 20 20" v-html="icons[t.icon]" /></button>
            <button v-if="t.menu" class="view-drop" :aria-label="t.label + ' menu'"><i class="caret" /></button>
          </template>
        </div>
        <div class="doc-bar">
          <button v-for="name in docTools" :key="name" :aria-label="name"><svg class="icon" viewBox="0 0 20 20" v-html="icons[name]" /></button>
        </div>
        <div class="task-pane">
          <button v-for="(name, i) in taskPane" :key="name" :class="{ active: i === 0 }" :aria-label="name">
            <svg class="icon" viewBox="0 0 20 20" v-html="icons[name]" />
          </button>
        </div>
        <button class="splitter" aria-label="Collapse panel"><i class="dot" /></button>
        <svg class="triad" viewBox="0 0 80 80">
          <path d="M21 35L20 24" stroke="#1a1a7a" stroke-width="5" />
          <path d="M14 24a6 5 0 0 1 12-1l-3 3h-6z" fill="#1818c8" />
          <path d="M22 34v22" stroke="#1c6a1c" stroke-width="5" />
          <path d="M16 55h12l-6 13z" fill="#1a4d1a" />
          <path d="M22 35h27" stroke="#c01818" stroke-width="5" />
          <path d="M23 34.500h26" stroke="#ff5a5a" stroke-width="2" />
          <path d="M48 29l12 6-12 6z" fill="#b81414" />
          <text x="14" y="16" fill="#00f">Z</text>
          <text x="60" y="38" fill="#f00">X</text>
          <text x="17" y="77" fill="#008000">Y</text>
        </svg>
      </section>
    </main>

    <div class="bottom-tabs">
      <div class="nav">
        <button v-for="n in navButtons" :key="n.label" :aria-label="n.label">
          <svg viewBox="0 0 16 16"><path :d="n.d" fill="#8585a3" stroke="#77779a" /></svg>
        </button>
      </div>
      <button
        v-for="t in bottomTabs"
        :key="t"
        :class="['sheet', { active: t === activeBottom }]"
        @click="activeBottom = t"
      >
        {{ t }}
      </button>
      <div class="filler" />
    </div>

    <footer class="status">
      <span class="edition">SOLIDWORKS Student Edition - Academic Use Only</span>
      <span>Editing Part</span>
      <svg class="icon small warn" viewBox="0 0 20 20" v-html="icons.warn" />
      <span>MMGS</span>
      <button class="units" aria-label="Unit system"><i class="caret up" /></button>
      <svg class="icon tag" viewBox="0 0 20 20" v-html="icons.tag" />
    </footer>
  </div>
</template>

<style>
body {
  margin: 0;
  background: #f7f7f7;
}
</style>

<style scoped>
.app {
  display: flex;
  flex-direction: column;
  height: 100vh;
  overflow: hidden;
  background: #f7f7f7;
  color: #111;
  font-family: "Noto Sans", "Open Sans", sans-serif;
  font-size: 14px;
  line-height: 18px;
}

button {
  margin: 0;
  padding: 0;
  border: 0;
  background: none;
  color: inherit;
  font: inherit;
  display: flex;
  align-items: center;
  justify-content: center;
  flex-shrink: 0;
}

input {
  min-width: 0;
  flex: 1;
  padding: 0;
  border: 0;
  outline: 0;
  background: none;
  font: inherit;
}

.icon {
  width: 20px;
  height: 20px;
  flex-shrink: 0;
  display: block;
}

.icon.small {
  width: 18px;
  height: 18px;
}

.caret {
  width: 0;
  height: 0;
  border: 3px solid transparent;
  border-top-color: #333;
  border-bottom: 0;
}

.caret.up {
  border: 3px solid transparent;
  border-bottom-color: #333;
  border-top: 0;
}

.tri {
  width: 0;
  height: 0;
  border: 4px solid transparent;
}

.tri.right {
  border-left: 4px solid #555;
  border-right: 0;
}

.tri.left {
  border-right: 4px solid #555;
  border-left: 0;
}

.tri.down {
  border-top: 4px solid #555;
  border-bottom: 0;
}

.dot {
  width: 4px;
  height: 4px;
  border: 1px solid #888;
  border-radius: 50%;
  background: #ddd;
}

/* top bar */
.topbar {
  display: flex;
  align-items: center;
  height: 40px;
  box-sizing: border-box;
  border-top: 1px solid #bbb;
  border-bottom: 1px solid #bbb;
  flex-shrink: 0;
  overflow: hidden;
  font-size: 13px;
}

.brand {
  display: flex;
  align-items: center;
  width: 134px;
  color: #d8232a;
}

.brand-mark {
  width: 22px;
  height: 22px;
  margin: 0 3px 6px 0;
}

.brand-name {
  font-family: Lato, sans-serif;
  font-style: italic;
  font-size: 14px;
  font-weight: 300;
}

.brand-name b {
  font-weight: 900;
}

.menus {
  display: flex;
}

.menus button {
  padding: 3px 8px 0;
}

.pin {
  width: 25px;
  align-self: stretch;
  border-right: 1px solid #bbb;
}

.quick {
  display: flex;
  align-items: center;
}

.quick-list {
  display: flex;
  gap: 3px;
}

.quick-item {
  display: flex;
}

.quick-btn {
  width: 24px;
  height: 24px;
}

.quick-btn.home {
  margin: 0 9px 0 22px;
}

.quick-btn.wide {
  width: 33px;
}

.drop {
  width: 20px;
  height: 24px;
}

.drop.faded {
  opacity: 0.5;
}

.drop.gray {
  opacity: 0.6;
}

.select-tool {
  display: flex;
  width: 47px;
  height: 32px;
  box-sizing: border-box;
  border: 1px solid #888;
}

.select-main {
  width: 31px;
  background: #b1b1b1;
  border-right: 1px solid #888;
}

.select-drop {
  flex: 1;
}

.title {
  flex: 1;
  padding-right: 6px;
  text-align: center;
  white-space: nowrap;
}

.search {
  display: flex;
  align-items: center;
  width: 252px;
  height: 29px;
  box-sizing: border-box;
  margin-right: 3px;
  padding: 0 0 0 6px;
  border: 1px solid #bbb;
  background: #fff;
  font-size: 12px;
}

.search input {
  margin-left: 7px;
  color: #666;
}

.search input::placeholder {
  color: #666;
  opacity: 1;
}

.win-btn {
  width: 41px;
  height: 32px;
  color: #333;
}

.win-btn:last-child {
  margin-right: -4px;
}

/* ribbon */
.ribbon {
  display: flex;
  height: 82px;
  box-sizing: border-box;
  border-bottom: 1px solid #808080;
  flex-shrink: 0;
  font-size: 13px;
}

.group {
  display: flex;
  height: 78px;
  margin-top: 1px;
  border-right: 1px solid #bbb;
}

.group:first-child {
  padding-left: 1px;
}

.big {
  flex-direction: column;
  justify-content: flex-start;
  height: 78px;
  padding-top: 4px;
}

.big span {
  margin-top: 3px;
  text-align: center;
}

.big .caret {
  margin: auto 0 9px;
}

.instant {
  width: 71px;
  margin: 1px 0 0 2px;
  padding-top: 3px;
  border: 1px solid #777;
  background: #b1b1b1;
}

.column {
  display: flex;
  flex-direction: column;
}

.small-btn {
  height: 26px;
  justify-content: flex-start;
  gap: 6px;
  white-space: nowrap;
}

.collapse {
  margin: auto 3px 3px auto;
}

/* workspace */
.workspace {
  flex: 1;
  min-height: 0;
  display: grid;
  grid-template-columns: 28px 276px 1fr;
  grid-template-rows: 28px 1fr;
}

.tabs {
  grid-area: 1 / 1 / 2 / 4;
  justify-self: start;
  display: flex;
  z-index: 1;
}

.tabs button {
  padding: 0 9px;
  background: #d2d2d2;
  border-right: 1px solid #808080;
  border-bottom: 1px solid #808080;
}

.tabs button:last-child {
  padding: 0 12px;
}

.tabs button.active {
  padding: 0 7px;
  background: #f7f7f7;
  font-weight: 700;
  color: #333;
}

.sidebar {
  grid-area: 2 / 1;
  display: flex;
  flex-direction: column;
  align-items: flex-start;
}

.grip {
  width: 26px;
  margin: 3px 0 8px;
  border-top: 2px dotted #999;
}

.side-group {
  width: 26px;
  padding-bottom: 2px;
  margin-bottom: 5px;
  border-bottom: 1px solid #888;
}

.side-group button {
  width: 24px;
  height: 26px;
}

.panel {
  grid-area: 2 / 2;
  display: flex;
  flex-direction: column;
  min-width: 0;
  min-height: 0;
  padding-right: 2px;
}

.panel-handle {
  display: flex;
  align-items: center;
  justify-content: center;
  height: 19px;
  margin-top: 3px;
  border-top: 1px solid #bbb;
  border-bottom: 1px solid #bbb;
}

.manager-tabs {
  display: flex;
  height: 25px;
  box-sizing: border-box;
  margin: 5px 0 0 2px;
  border-top: 1px solid #808080;
}

.manager-tabs button {
  width: 40px;
  background: #d2d2d2;
  border-right: 1px solid #808080;
  border-bottom: 1px solid #808080;
}

.manager-tabs button.active {
  background: #f7f7f7;
  border-bottom-color: #f7f7f7;
}

.manager-tabs button:nth-child(6) {
  width: 28px;
  padding-left: 9px;
  justify-content: flex-start;
  overflow: hidden;
  border-right-color: #ddd;
}

.manager-tabs .scroll {
  width: 22px;
  background: #fdfdfd;
  border-color: #ddd;
}

.manager-tabs .tri.left {
  border-right-color: #000;
}

.manager-tabs .tri.right {
  border-left-color: #000;
}

.tree-area {
  flex: 1;
  display: flex;
  flex-direction: column;
  min-height: 0;
  border-left: 1px solid #bbb;
}

.filter {
  display: flex;
  align-items: center;
  height: 32px;
  box-sizing: border-box;
  margin: 0 4px 1px;
  padding-left: 2px;
  border: 1px solid #bbb;
}

.tree {
  margin: 0;
  padding: 0;
  list-style: none;
}

.tree li {
  display: flex;
  align-items: center;
  height: 24px;
  white-space: nowrap;
}

.tree .root {
  padding-left: 4px;
  gap: 4px;
}

.twisty {
  display: flex;
  justify-content: center;
  width: 23px;
}

.child .twisty {
  width: 46px;
}

.node {
  display: flex;
  align-items: center;
  gap: 5px;
  height: 22px;
  padding: 0 2px;
  border: 1px solid transparent;
}

.node.selected {
  border-color: #808080;
  background: #fff;
}

.rollback {
  height: 4px;
  background: #3a8fc7;
}

.hscroll {
  margin-top: auto;
  padding: 9px 21px 8px;
  background: #efefef;
}

.hscroll i {
  display: block;
  width: 150px;
  height: 3px;
  border-radius: 2px;
  background: #858585;
}

.panel-foot {
  height: 2px;
  margin-top: 2px;
  border-top: 1px solid #bbb;
  border-bottom: 1px solid #bbb;
}

/* viewport */
.viewport {
  grid-area: 1 / 3 / 3 / 4;
  position: relative;
  min-width: 0;
  border-left: 1px solid #808080;
  background:
    radial-gradient(ellipse 40% 26% at 100% 100%, rgba(236, 238, 244, 0.9), rgba(236, 238, 244, 0)),
    radial-gradient(ellipse 20% 12% at 0% 100%, rgba(240, 243, 248, 0.7), rgba(240, 243, 248, 0)),
    linear-gradient(to bottom, rgba(254, 254, 254, 0) 54%, rgba(254, 254, 254, 0.6) 62%, #fefefe 71%),
    radial-gradient(ellipse 22% 46% at 103% 0%, rgba(243, 242, 244, 1), rgba(243, 242, 244, 0)),
    radial-gradient(ellipse 30% 85% at 82% 32%, #d9dce9 0%, rgba(220, 223, 234, 0.8) 40%, rgba(226, 229, 239, 0) 100%),
    linear-gradient(to bottom, #fefefe 26%, #f2f4f9 42%, #e3e6f0 54%);
}

.model {
  display: block;
  width: 100%;
  height: 100%;
}

.view-bar {
  position: absolute;
  top: 3px;
  left: 0;
  right: 0;
  display: flex;
  justify-content: center;
  height: 24px;
  opacity: 0.85;
}

.view-btn {
  width: 26px;
}

.view-drop {
  width: 14px;
}

.view-drop .caret {
  border-top-color: #777;
}

.doc-bar {
  position: absolute;
  top: 3px;
  right: 5px;
  display: flex;
  height: 24px;
  color: #909090;
}

.doc-bar button {
  width: 26px;
}

.task-pane {
  position: absolute;
  top: 57px;
  right: 0;
  display: flex;
  flex-direction: column;
  border: 1px solid #808080;
  border-right: 0;
}

.task-pane button {
  width: 31px;
  height: 30px;
  background: #d2d2d2;
}

.task-pane button + button {
  border-top: 1px solid #808080;
}

.task-pane button.active {
  background: #fafafa;
}

.splitter {
  position: absolute;
  top: 432px;
  left: -1px;
  width: 12px;
  height: 48px;
  border: 1px solid #808080;
  border-left: 0;
  background: #fafafa;
}

.triad {
  position: absolute;
  left: 28px;
  bottom: 24px;
  width: 80px;
  height: 80px;
  font-family: "Liberation Sans", sans-serif;
  font-size: 13px;
}

/* bottom */
.bottom-tabs {
  display: flex;
  height: 21px;
  box-sizing: border-box;
  padding-left: 29px;
  border-bottom: 1px solid #808080;
  flex-shrink: 0;
  font-size: 15px;
  line-height: 16px;
}

.nav {
  display: flex;
  border-top: 1px solid #111;
}

.nav button {
  width: 20px;
  border: 1px solid #8c8ca6;
  background: #a9a9c1;
}

.nav svg {
  width: 14px;
  height: 14px;
}

.sheet {
  padding: 0 12px;
  background: #d2d2d2;
  border-top: 1px solid #808080;
  border-right: 1px solid #808080;
}

.sheet.active {
  padding: 0 14px 0 17px;
  background: #fdfdfd;
  border-top-color: #fdfdfd;
  font-weight: 700;
}

.sheet:nth-last-child(2) {
  padding: 0 24px 0 13px;
}

.filler {
  flex: 1;
  border-top: 1px solid #808080;
}

.status {
  display: flex;
  align-items: center;
  height: 23px;
  padding-top: 1px;
  box-sizing: border-box;
  flex-shrink: 0;
}

.edition {
  margin-left: -1px;
  margin-right: auto;
}

.warn {
  margin: 0 81px 0 28px;
}

.units {
  width: 56px;
}
</style>
